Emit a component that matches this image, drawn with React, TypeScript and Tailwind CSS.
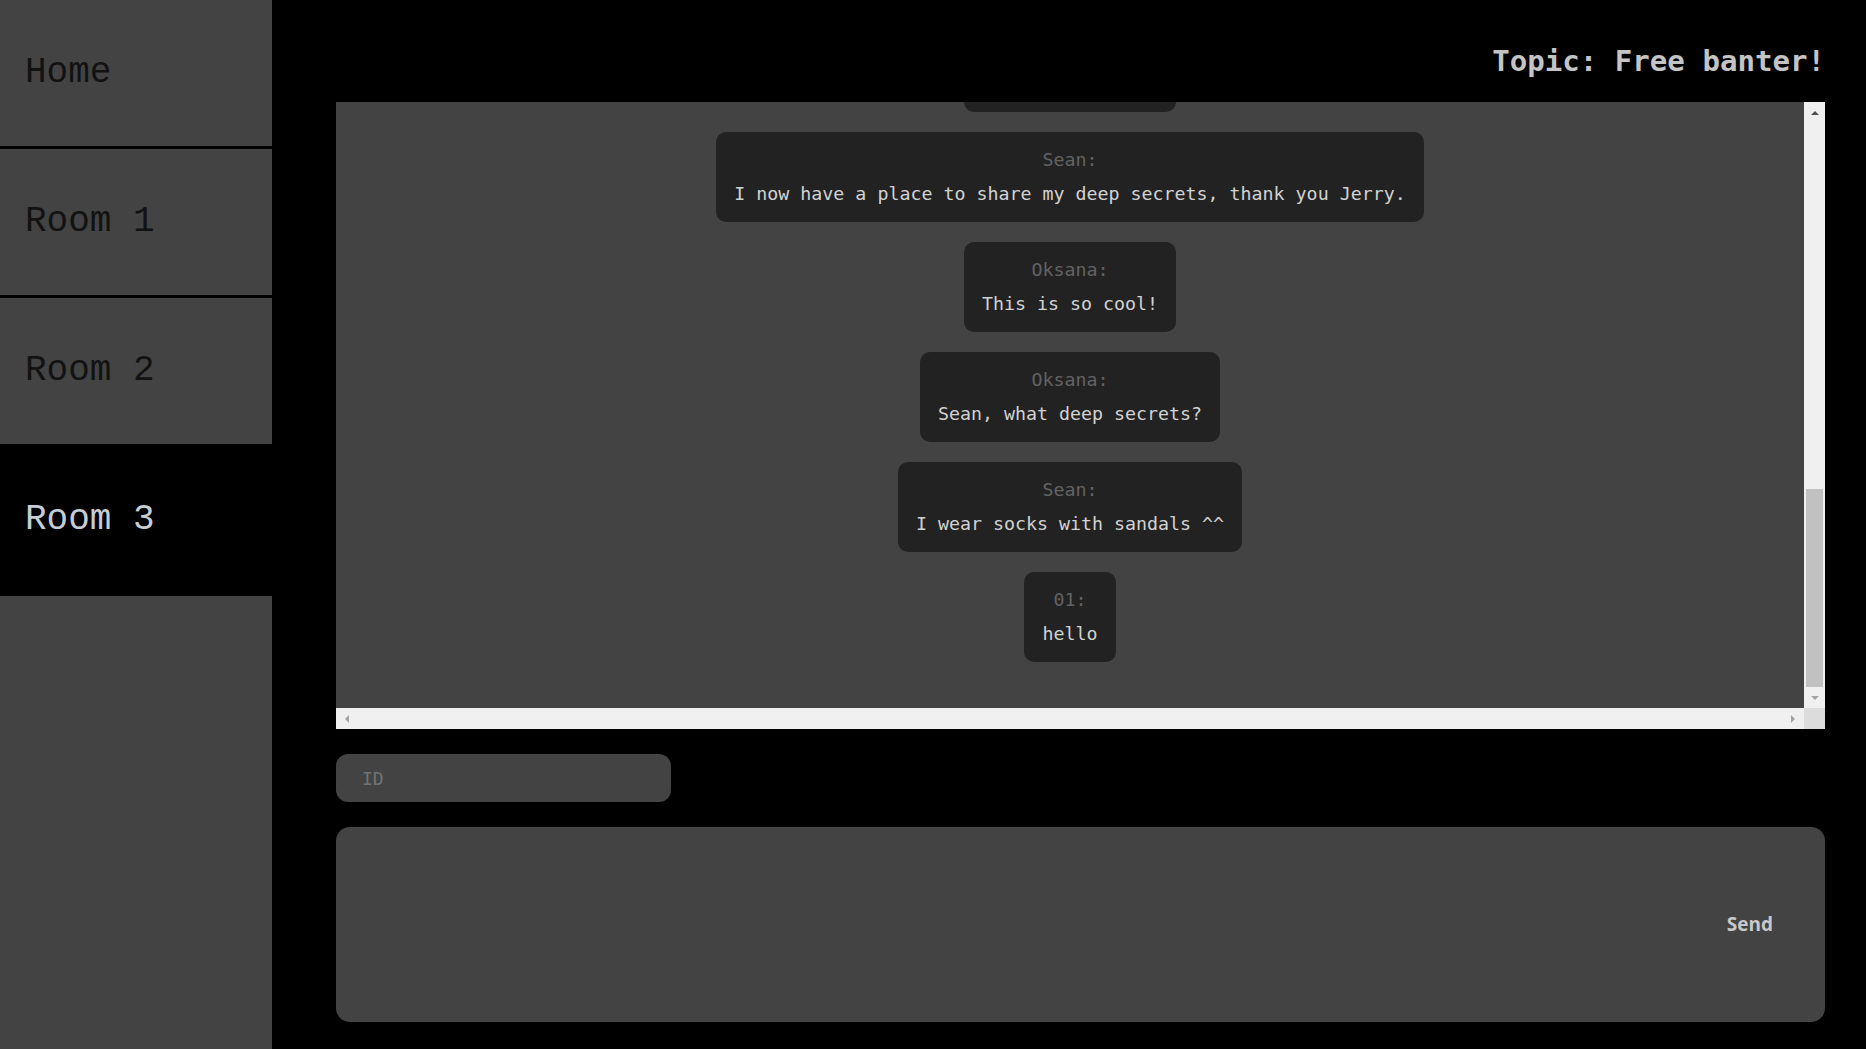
import React from 'react';

type Message = { author: string; text: string };

const messages: Message[] = [
    { author: 'Jerry:', text: 'Welcome to chat!' },
    { author: 'Sean:', text: 'I now have a place to share my deep secrets, thank you Jerry.' },
    { author: 'Oksana:', text: 'This is so cool!' },
    { author: 'Oksana:', text: 'Sean, what deep secrets?' },
    { author: 'Sean:', text: 'I wear socks with sandals ^^' },
    { author: '01:', text: 'hello' },
];

const rooms = ['Home', 'Room 1', 'Room 2', 'Room 3'];
const activeRoom = 'Room 3';

function Sidebar() {
    return (
        <nav className="w-[272px] shrink-0 bg-[#434343] flex flex-col">
            {rooms.map((room) => (
                <button
                    key={room}
                    type="button"
                    className={`h-[149px] shrink-0 border-b-[3px] border-black flex items-center pl-[25px] text-left text-[36px] font-['Liberation_Mono',monospace] ${
                        room === activeRoom ? 'bg-black text-[#c6cdd4]' : 'text-[#121212]'
                    }`}
                >
                    {room}
                </button>
            ))}
        </nav>
    );
}

function Bubble({ author, text }: Message) {
    return (
        <div className="shrink-0 bg-[#222222] rounded-[10px] px-[18px] py-[13px] text-center font-['DejaVu_Sans_Mono',monospace] text-[18.3px] leading-[30px] whitespace-nowrap">
            <div className="text-[#626262]">{author}</div>
            <div className="mt-[4px] text-[#d2d2d2]">{text}</div>
        </div>
    );
}

function Arrow({ dir }: { dir: 'up' | 'down' | 'left' | 'right' }) {
    const points = {
        up: '1,6 5,2 9,6',
        down: '1,2 5,6 9,2',
        left: '6,1 2,5 6,9',
        right: '2,1 6,5 2,9',
    }[dir];
    const vertical = dir === 'up' || dir === 'down';
    return (
        <svg viewBox={vertical ? '0 0 10 8' : '0 0 8 10'} className={vertical ? 'w-[10px] h-[8px]' : 'w-[8px] h-[10px]'}>
            <polygon points={points} fill={dir === 'up' ? '#505050' : '#a3a3a3'} />
        </svg>
    );
}

function ChatWindow() {
    return (
        <div className="h-[627px] flex flex-col bg-[#f0f0f0]">
            <div className="flex-1 flex min-h-0">
                <div className="flex-1 bg-[#434343] overflow-hidden flex flex-col justify-end items-center gap-[20px] pb-[46px]">
                    {messages.map((m, i) => (
                        <Bubble key={i} author={m.author} text={m.text} />
                    ))}
                </div>
                {/* vertical scrollbar */}
                <div className="w-[21px] shrink-0 flex flex-col">
                    <div className="h-[21px] flex items-center justify-center">
                        <Arrow dir="up" />
                    </div>
                    <div className="flex-1 flex flex-col justify-end px-[2px]">
                        <div className="h-[198px] bg-[#c1c1c1]" />
                    </div>
                    <div className="h-[21px] flex items-center justify-center">
                        <Arrow dir="down" />
                    </div>
                </div>
            </div>
            {/* horizontal scrollbar */}
            <div className="h-[21px] shrink-0 flex">
                <div className="flex-1 flex items-center justify-between px-[7px]">
                    <Arrow dir="left" />
                    <Arrow dir="right" />
                </div>
                <div className="w-[21px] bg-[#dcdcdc]" />
            </div>
        </div>
    );
}

export default function App() {
    return (
        <div className="flex w-full h-[1049px] bg-black overflow-hidden">
            <Sidebar />
            <main className="flex-1 flex flex-col pl-[64px] pr-[41px]">
                <header className="h-[102px] shrink-0 flex justify-end pt-[44px]">
                    <h1 className="text-[29.1px] leading-[34px] font-bold text-[#c4c4c4] font-['DejaVu_Sans_Mono',monospace]">
                        Topic: Free banter!
                    </h1>
                </header>

                <ChatWindow />

                <input
                    type="text"
                    placeholder="ID"
                    className="mt-[25px] w-[335px] h-[48px] shrink-0 rounded-[12px] bg-[#434343] pl-[26px] text-[18px] text-[#d2d2d2] placeholder:text-[#727272] outline-none font-['DejaVu_Sans_Mono',monospace]"
                />

                <div className="mt-[25px] h-[195px] shrink-0 rounded-[14px] bg-[#434343] flex items-center">
                    <textarea className="flex-1 h-full bg-transparent resize-none outline-none p-[20px] text-[#d2d2d2] font-['DejaVu_Sans_Mono',monospace]" />
                    <button
                        type="button"
                        className="pr-[52px] pl-[20px] text-[19px] font-bold text-[#c8c8c8] font-['Open_Sans',sans-serif]"
                    >
                        Send
                    </button>
                </div>
            </main>
        </div>
    );
}
